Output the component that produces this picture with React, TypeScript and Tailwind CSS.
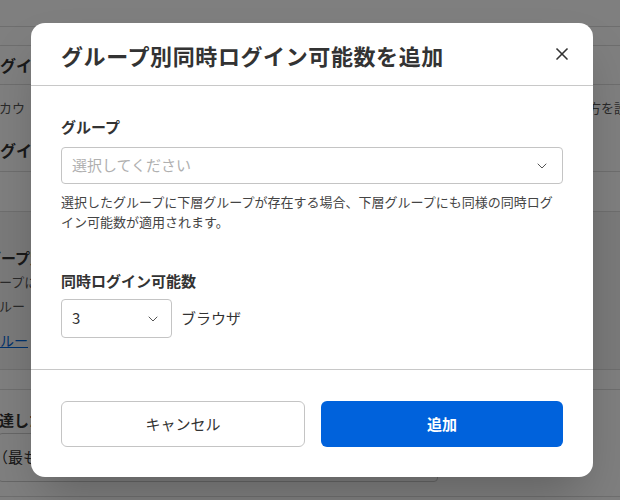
import React from 'react'
import {ChevronDown, X} from 'lucide-react'

const font = {fontFamily: '"Noto Sans CJK JP", "Noto Sans", sans-serif'}

// Settings page that sits behind the dialog
const BackgroundPage = () => {
    return (
        <div className="w-[620px] h-[500px] overflow-hidden bg-white text-[#333]">
            <div className="h-[27px] border-b border-[#ddd]"></div>
            <div className="h-[19px] border-b border-[#ddd]"></div>
            <div className="h-[39px] border-b border-[#ddd] flex items-center -ml-[16px]">
                <span className="text-[16px] font-bold">ログイン</span>
            </div>
            <div className="h-[87px] border-b border-[#ddd] pt-[12px]">
                <div className="flex justify-between leading-[22px] text-[13px] text-[#555]">
                    <span className="-ml-[14px]">アカウ</span>
                    <span className="-mr-[20px]">方を設定</span>
                </div>
                <p className="-ml-[16px] mt-[19px] text-[16px] font-bold leading-[24px]">ログイン</p>
            </div>
            <div className="h-[40px] border-b border-[#ddd]"></div>
            <div className="h-[158px] bg-[#f5f5f5] border-b border-[#ddd] -ml-[14px] pt-[34px]">
                <p className="text-[15px] font-bold leading-[24px]">グープ別</p>
                <p className="text-[13px] text-[#555] leading-[24px]">グープに</p>
                <p className="text-[13px] text-[#555] leading-[24px]">グルー</p>
                <p className="text-[14px] text-[#0064d9] underline leading-[24px] mt-[10px]">グルー</p>
            </div>
            <div className="h-[20px] border-b border-[#ddd]"></div>
            <div className="h-[43px] flex items-end pb-[2px] -ml-[16px]">
                <span className="text-[15px] font-bold">上達した</span>
            </div>
            <div className="w-[440px] h-[49px] -ml-[2px] border border-[#ccc] rounded-[4px] flex items-center">
                <span className="text-[15px] -ml-[6px]">（最も</span>
            </div>
            <div className="h-[15px] border-b border-[#ddd]"></div>
        </div>
    )
}

const App = () => {
    return (
        <div className="relative w-[620px] h-[500px] overflow-hidden" style={font}>
            <BackgroundPage/>

            {/* Overlay + dialog */}
            <div className="absolute inset-0 bg-black/50 flex items-center justify-center pl-[4px]">
                <div className="w-[562px] bg-white rounded-[14px] shadow-2xl text-[#333]">
                    <div className="h-[63px] pl-[30px] pr-[21px] flex items-center justify-between border-b border-[#c8c8c8]">
                        <h1 className="text-[22px] font-bold tracking-[0.6px] pt-[2px]">グループ別同時ログイン可能数を追加</h1>
                        <X className="w-[20px] h-[20px] text-[#333]" strokeWidth={2}/>
                    </div>

                    <div className="px-[30px] pt-[30px] pb-[31px] border-b border-[#c8c8c8]">
                        <label className="block text-[15px] font-bold leading-[22px]">グループ</label>
                        <div className="mt-[9px] h-[37px] border border-[#c4c4c4] rounded-[4px] flex items-center justify-between pl-[10px] pr-[12px]">
                            <span className="text-[15px] text-[#b0b0b0]">選択してください</span>
                            <ChevronDown className="w-[16px] h-[16px] text-[#555]" strokeWidth={1.5}/>
                        </div>
                        <p className="mt-[8px] text-[13px] leading-[20px] text-[#444]">
                            選択したグループに下層グループが存在する場合、下層グループにも同様の同時ログイン可能数が適用されます。
                        </p>

                        <label className="block mt-[38px] text-[15px] font-bold leading-[22px]">同時ログイン可能数</label>
                        <div className="mt-[7px] flex items-center gap-[9px]">
                            <div className="w-[111px] h-[39px] border border-[#c4c4c4] rounded-[4px] flex items-center justify-between pl-[10px] pr-[10px]">
                                <span className="text-[15px]">3</span>
                                <ChevronDown className="w-[16px] h-[16px] text-[#555]" strokeWidth={1.5}/>
                            </div>
                            <span className="text-[15px]">ブラウザ</span>
                        </div>
                    </div>

                    <div className="px-[30px] pt-[31px] pb-[30px] flex gap-[16px]">
                        <button className="flex-1 h-[46px] border border-[#c4c4c4] rounded-[6px] bg-white text-[15px] text-[#333]">
                            キャンセル
                        </button>
                        <button className="flex-1 h-[46px] rounded-[6px] bg-[#0062dc] text-[15px] font-bold text-white">
                            追加
                        </button>
                    </div>
                </div>
            </div>
        </div>
    )
}

export default App
